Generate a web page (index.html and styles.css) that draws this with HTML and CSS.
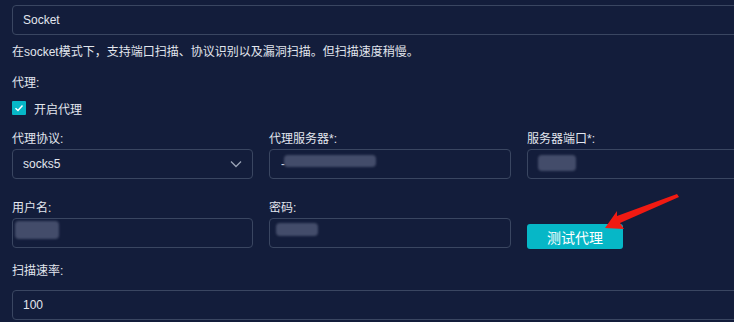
FILE: index.html
```html
<!DOCTYPE html>
<html lang="zh">
<head>
<meta charset="utf-8">
<link rel="stylesheet" href="styles.css">
</head>
<body>
<div class="form">
  <div class="input wide">Socket</div>
  <div class="desc">在socket模式下，支持端口扫描、协议识别以及漏洞扫描。但扫描速度稍慢。</div>
  <div class="label solo">代理:</div>
  <div class="check-row">
    <span class="checkbox"><svg viewBox="0 0 14 14" width="14" height="14"><path d="M3.5 7.2 L6 9.5 L10.5 4.5" fill="none" stroke="#fff" stroke-width="1.5"/></svg></span>
    <span>开启代理</span>
  </div>
  <div class="grid row1">
    <div class="col">
      <div class="label">代理协议:</div>
      <div class="input select">socks5<svg class="chev" viewBox="0 0 12 8" width="12" height="8"><path d="M1 1.5 L6 6.5 L11 1.5" fill="none" stroke="#9aa3b6" stroke-width="1.3"/></svg></div>
    </div>
    <div class="col">
      <div class="label">代理服务器*:</div>
      <div class="input"><span class="dash">-</span><span class="mask m1"></span></div>
    </div>
    <div class="col">
      <div class="label">服务器端口*:</div>
      <div class="input"><span class="mask m2"></span></div>
    </div>
  </div>
  <div class="grid row2">
    <div class="col">
      <div class="label">用户名:</div>
      <div class="input"><span class="mask m3"></span></div>
    </div>
    <div class="col">
      <div class="label">密码:</div>
      <div class="input"><span class="mask m4"></span></div>
    </div>
    <div class="col btn-col">
      <button class="btn">测试代理</button>
    </div>
  </div>
  <div class="label rate">扫描速率:</div>
  <div class="input wide">100</div>
</div>
<svg class="arrow" width="734" height="322" viewBox="0 0 734 322">
  <polygon points="677,194 617,216 617,211 605,228 624,229 620,223 679,197" fill="#f01a12"/>
</svg>
</body>
</html>
```

FILE: styles.css
```css
html, body {
  margin: 0;
  padding: 0;
  background: #131d3b;
  overflow: hidden;
  width: 734px;
  height: 322px;
}
body {
  position: relative;
  font-family: "Liberation Sans", "Noto Sans CJK SC", sans-serif;
  font-size: 12px;
  color: #e2e6ee;
}
.form {
  padding: 5px 0 0 12px;
  width: 758px;
}
.input {
  box-sizing: border-box;
  height: 30px;
  border: 1px solid #3a4661;
  border-radius: 4px;
  padding-left: 10px;
  display: flex;
  align-items: center;
  position: relative;
  overflow: hidden;
}
.desc {
  margin-top: 7px;
  line-height: 20px;
}
.label {
  line-height: 20px;
}
.label.solo {
  margin-top: 11px;
}
.check-row {
  margin-top: 5px;
  height: 20px;
  display: flex;
  align-items: center;
  gap: 8px;
}
.checkbox {
  width: 14px;
  height: 14px;
  background: #06b7c7;
  border-radius: 1px;
  display: flex;
}
.grid {
  display: grid;
  grid-template-columns: 241px 242px 242px;
  column-gap: 16px;
}
.row1 {
  margin-top: 11px;
}
.row2 {
  margin-top: 19px;
}
.select {
  justify-content: space-between;
  padding-right: 10px;
}
.chev {
  display: block;
}
.btn-col {
  display: flex;
  align-items: flex-end;
}
.btn {
  width: 96px;
  height: 25px;
  border: none;
  border-radius: 3px;
  background: #06b7c7;
  color: #fff;
  font-family: "Liberation Sans", "Noto Sans CJK SC", sans-serif;
  font-size: 14px;
  padding: 0;
  margin-bottom: -1px;
}
.rate {
  margin-top: 13px;
  margin-bottom: 9px;
}
.dash {
  color: #e2e6ee;
  margin-left: 1px;
}
.mask {
  position: absolute;
  background: #434c6a;
  filter: blur(1px);
  border-radius: 4px;
}
.m1 {
  left: 14px;
  top: 5px;
  width: 92px;
  height: 12px;
}
.m2 {
  left: 10px;
  top: 5px;
  width: 38px;
  height: 16px;
}
.m3 {
  left: 2px;
  top: 2px;
  width: 44px;
  height: 18px;
}
.m4 {
  left: 6px;
  top: 4px;
  width: 42px;
  height: 13px;
}
.arrow {
  position: absolute;
  left: 0;
  top: 0;
  pointer-events: none;
}
```
